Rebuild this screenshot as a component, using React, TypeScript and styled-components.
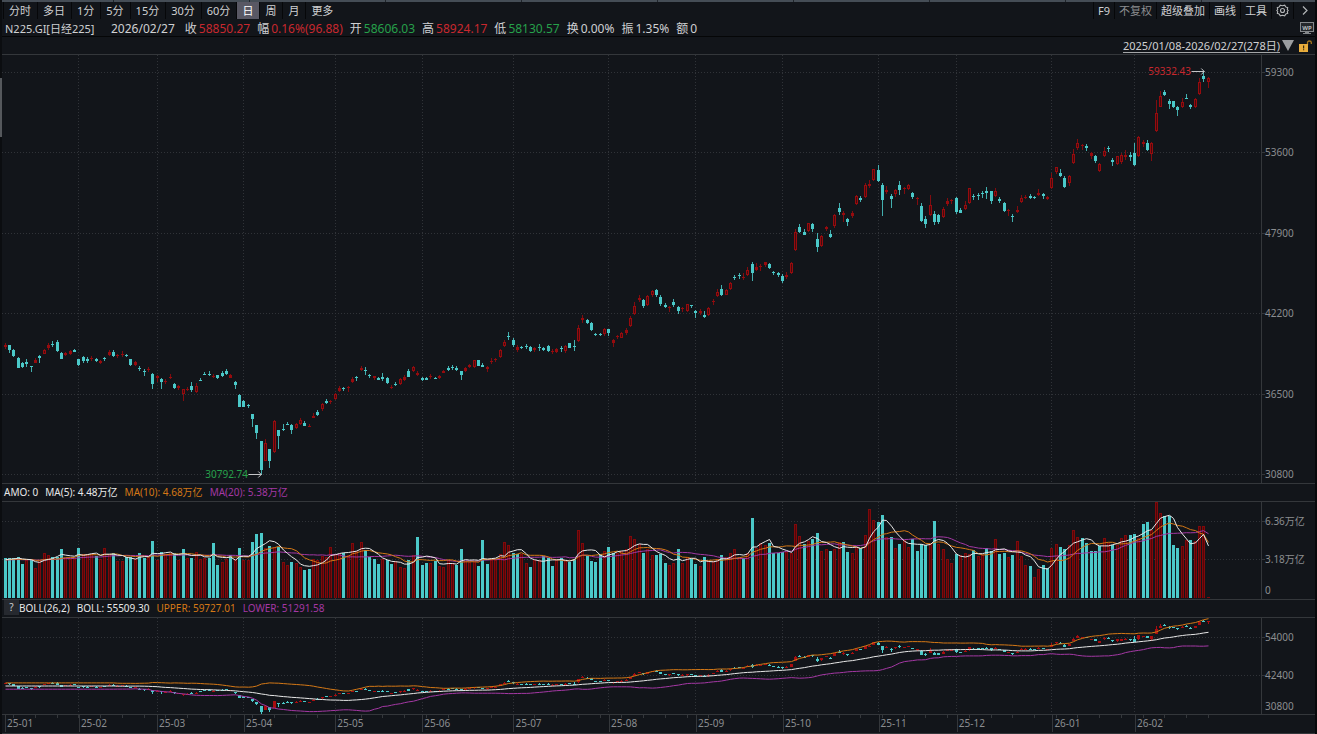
import React from "react";
import styled, { createGlobalStyle } from "styled-components";

const color = {
  bg: "#12151a",
  line: "#34373b",
  grid: "#303338",
  text: "#cfd0d2",
  dim: "#8b8d90",
  red: "#c8282e",
  green: "#26a04a",
  cyan: "#4bc9c9",
  orange: "#d47816",
  purple: "#a438a4",
  white: "#e8e8e8",
};

/* ---------- data ---------- */

// One candle per token: direction, then high, body top, body bottom, low as chart levels.
const CANDLES = `
r343,345,347,349 c345,345,350,353 c349,350,356,357 c357,358,368,368 c362,363,367,368 c359,362,364,367 c366,366,367,372
r358,360,363,363 c355,356,358,363 r349,350,354,354 r343,345,348,350 c341,344,345,347 c340,342,351,352 c352,353,359,359
r352,353,355,356 r350,351,354,355 c349,350,352,352 c359,359,365,366 c356,357,361,363 c357,359,361,363 r356,358,359,361
c358,359,361,362 r360,361,363,364 c357,358,359,361 r350,352,355,356 c350,352,356,357 r354,355,356,358 r351,354,355,357
c354,355,356,357 c359,359,365,366 r361,362,365,366 c366,368,369,371 c369,371,372,376 r367,369,370,372 c373,374,384,389
r375,376,378,382 c378,379,382,389 r379,381,382,384 r374,377,378,379 c383,384,388,389 r385,386,388,390 r389,389,394,401
r387,389,390,391 c382,386,390,392 r383,386,392,393 c378,380,381,381 c372,374,375,375 c371,374,375,376 r374,376,377,378
c375,375,378,379 c371,373,376,377 c369,371,374,375 r374,375,378,378 c381,382,385,389 c394,395,407,407 c400,401,407,407
c404,405,406,408 c414,414,419,427 c425,425,433,439 c441,441,470,475 r439,443,461,461 c449,449,461,468 r420,421,452,453
c430,430,436,449 c424,429,430,431 c422,424,425,425 c424,425,430,434 r423,424,428,429 r418,420,424,425 c421,423,426,426
r424,426,427,427 r413,416,418,418 c410,412,415,416 r403,404,409,411 c399,401,403,404 r400,401,402,404 r393,394,399,400
r386,388,391,392 c387,388,389,391 r386,387,388,392 r377,379,382,383 c376,377,378,381 r366,368,370,371 c367,370,371,375
c374,375,376,378 r376,376,378,380 c377,378,380,380 c373,377,379,381 c377,378,383,384 r385,387,388,389 c382,384,385,386
r378,379,384,385 r375,377,380,381 c369,371,377,377 r366,367,371,372 r371,373,375,376 c377,378,380,381 c377,378,380,380
r374,376,377,379 c377,378,379,379 r375,376,378,379 r370,371,373,373 c366,368,370,371 c365,367,368,370 c366,368,370,371
c371,371,375,380 r367,368,371,372 r364,365,367,368 r360,360,367,368 c360,360,366,366 c363,365,367,367 r366,367,369,372
r358,361,362,364 r358,359,360,362 r349,350,357,358 r340,342,346,347 c332,336,337,340 c338,340,345,347 r345,347,350,352
c346,347,348,349 c344,346,347,349 c346,347,351,352 r347,348,350,352 c344,347,348,351 c347,348,350,351 c345,346,351,352
r349,351,352,354 r348,349,352,353 c346,348,349,352 r345,346,351,353 c343,343,348,348 c340,346,347,351 r325,328,341,342
r315,318,320,323 c319,320,323,324 c322,323,330,331 c333,334,335,336 c333,334,335,336 r328,329,334,336 c329,329,333,336
r339,340,343,347 r335,336,337,339 r332,333,338,338 r328,330,333,335 r316,318,326,327 r302,306,314,315 r295,298,300,302
c299,300,306,308 r295,296,305,306 r290,291,295,297 c289,290,295,297 c295,297,304,306 c303,305,307,308 r306,307,308,312
c299,302,305,307 c306,307,311,314 r307,308,309,312 r304,304,311,312 c305,305,306,308 c310,311,313,318 r309,311,313,315
c311,315,317,318 r307,308,315,316 r299,301,302,305 r289,292,296,297 c285,289,295,296 r289,290,295,295 r282,283,289,290
c275,277,278,280 c273,275,276,279 r273,277,278,280 r267,270,275,276 c262,264,273,281 r263,267,270,271 r264,266,267,271
r262,262,265,267 c263,264,268,269 c271,272,273,275 c272,273,275,277 c274,276,281,283 r272,275,277,279 r262,263,273,274
r229,232,250,251 c224,227,232,233 c229,232,235,235 r223,223,231,232 c223,224,229,232 c233,239,247,252 r235,236,246,247
r226,227,229,231 c230,234,237,238 r214,215,226,228 c203,208,212,215 r211,213,215,222 c218,219,222,226 r211,213,216,218
r195,196,204,205 c196,198,200,202 r183,185,197,198 r180,184,186,188 r169,169,180,181 c165,170,181,182 c183,185,200,216
r186,190,192,194 c194,196,199,208 r189,190,194,197 c181,185,190,195 r187,188,189,194 r184,185,189,190 c192,193,197,199
r197,198,199,205 c203,206,221,222 c216,219,224,228 r195,205,215,216 c211,214,222,225 c214,215,222,224 r207,209,217,218
r198,201,204,206 r199,200,201,204 c197,198,212,214 c208,210,213,213 r201,205,209,210 r188,188,203,204 c194,196,197,200
c193,195,196,200 c191,193,194,198 c187,191,193,199 c191,191,201,204 r188,191,196,197 c197,199,201,203 c202,203,211,212
r209,210,211,216 c214,216,217,222 r206,210,212,213 r195,198,202,203 r195,197,198,199 c194,196,198,199 c196,197,198,199
r189,193,195,196 c193,194,196,199 r196,197,199,200 r173,178,188,189 r167,167,172,174 c169,173,176,177 c176,178,187,188
r175,176,183,186 r149,154,163,164 r139,143,148,150 r144,145,146,150 c144,146,148,151 r152,153,156,159 c155,156,161,163
r163,164,171,172 r147,151,156,157 c146,148,149,152 c158,160,162,166 r156,156,164,165 r153,155,162,164 r150,155,157,160
c152,155,157,161 c143,153,165,166 r136,137,156,157 r140,142,144,147 c140,143,150,151 r142,143,154,161 r100,113,131,132
r91,96,107,107 c90,92,95,96 c99,101,104,109 c101,101,107,108 c106,107,110,116 r98,102,107,108 c94,98,98,99
c104,105,107,109 r98,99,107,108 r78,82,94,95 c71,76,79,82 r77,78,82,88`;

// One volume bar per token: direction and the level of its top (355 is zero, three levels per unit).
const VOLUMES = `
c235 c233 c235 c230 c251 r240 c240 r265 r240 r220 r226 c230 c230 c208 r233 r236 r236 c203 r222 r222 r222 c228 r238 r203 r222
c220 r244 r244 c230 c232 r236 c218 c233 r230 c183 r240 c216 r222 r220 c218 r240 c206 r234 c233 r216 r236 r233 c235 c190 c256
r247 r238 c224 r238 c203 r240 r240 c185 c162 c160 r205 c198 r200 c200 r247 r256 c247 r250 r262 c270 c266 r236 r240 r228 r230
r200 r222 r222 c218 r225 r190 r213 r185 c210 c230 c238 c252 r238 c240 c252 r243 r262 r265 c240 r224 c172 c256 c249 r248 c244
r258 r262 r240 r248 c254 c208 r244 r247 r246 c259 c181 c253 r240 r240 r222 r187 r195 c220 c222 r222 r249 c262 r240 r240 c228
c233 c258 r240 c233 r240 c245 c238 r150 r190 c228 c243 c247 c222 r214 c201 c220 r218 r212 r208 r168 r178 r193 c219 r208 r226
c226 c222 c250 r255 r250 c206 r250 r230 c238 c251 r258 c232 r243 r243 r238 c226 r232 r220 r208 r232 c234 r218 c115 r205 r188
r195 c190 c218 c218 c215 r215 r220 r132 r168 c192 r182 c176 c160 r212 r208 c213 r207 r185 c186 c217 r218 r200 c205 r165 r87
r120 c126 c104 r170 c172 r205 c192 r180 r202 c178 c212 c193 c195 r188 c124 r192 r208 r238 r250 c222 r225 r220 r222 c210 r228
r225 c203 c213 r178 c222 c218 r232 c226 r183 r228 r256 c258 r290 r268 c254 c265 r205 r193 c202 c208 r195 r150 r172 c174 c190
c213 c213 c198 r175 r190 c195 r195 r173 r165 c165 c162 r175 c132 c126 r150 r67 r98 c108 c107 c196 c203 r198 r180 c180 r182
r137 r137 r352`;

const MONTHS = [
  { label: "25-01", days: 17 },
  { label: "25-02", days: 18 },
  { label: "25-03", days: 20 },
  { label: "25-04", days: 21 },
  { label: "25-05", days: 20 },
  { label: "25-06", days: 21 },
  { label: "25-07", days: 22 },
  { label: "25-08", days: 20 },
  { label: "25-09", days: 20 },
  { label: "25-10", days: 22 },
  { label: "25-11", days: 18 },
  { label: "25-12", days: 22 },
  { label: "26-01", days: 19 },
  { label: "26-02", days: 29 },
];

type Candle = { up: boolean; high: number; top: number; bottom: number; low: number };

const candles: Candle[] = CANDLES.trim()
  .split(/\s+/)
  .map((token) => {
    const [high, top, bottom, low] = token.slice(1).split(",").map(Number);
    return { up: token[0] === "r", high, top, bottom, low };
  });

const volumes = VOLUMES.trim()
  .split(/\s+/)
  .map((token) => ({ up: token[0] === "r", y: 480 + Number(token.slice(1)) / 3 }));

const monthStarts = MONTHS.slice(0, -1).reduce<number[]>(
  (list, m) => [...list, (list[list.length - 1] ?? 0) + m.days],
  []
);

/* ---------- chart maths ---------- */

const PLOT_LEFT = 2;
const PLOT_WIDTH = 1259;
const barX = (i: number) => Math.floor(5 + i * 4.344);
const bollY = (y: number) => 637.3 + (y - 146.8) * 0.2322;
const mean = (list: number[]) => list.reduce((a, b) => a + b, 0) / list.length;

const movingAverage = (n: number) =>
  volumes.map((_, i) => {
    const window: number[] = [];
    for (let k = i - n + 1; k <= i; k++) window.push(k < 0 ? 560 : volumes[k].y);
    return mean(window);
  });

const closes = candles.map((c) => (c.up ? c.top : c.bottom));
const boll = closes.map((_, i) => {
  const end = Math.max(i, 25);
  const window = closes.slice(end - 25, end + 1);
  const mid = mean(window);
  const sd = Math.sqrt(mean(window.map((v) => (v - mid) ** 2)));
  return { mid: bollY(mid), upper: bollY(mid - 2 * sd), lower: bollY(mid + 2 * sd) };
});

const points = (ys: number[]) => ys.map((y, i) => `${barX(i) + 0.5},${y.toFixed(1)}`).join(" ");

/* ---------- styles ---------- */

const GlobalStyle = createGlobalStyle`
  * { box-sizing: border-box; }
  body { margin: 0; background: ${color.bg}; }
  button { font: inherit; color: inherit; background: none; border: 0; padding: 0; cursor: pointer; }
`;

const Page = styled.div`
  display: flex;
  min-height: 100vh;
  background: ${color.bg};
  color: ${color.text};
  font: 11px/16px "Noto Sans", "Noto Sans CJK SC", sans-serif;
  white-space: nowrap;
`;

const Rail = styled.aside`
  flex: none;
  width: 2px;
  padding-top: 78px;
  background: #0b0d10;
`;

const RailThumb = styled.div`
  height: 59px;
  background: #55585c;
`;

const Terminal = styled.main`
  flex: 1;
  min-width: 0;
  display: flex;
  flex-direction: column;
  border-right: 2px solid #08090b;
`;

const TopEdge = styled.div`
  height: 2px;
  background: repeating-linear-gradient(90deg, #454d56 0 135px, #20252b 135px 136px);
  background-position: -24px 0;
`;

const Toolbar = styled.nav`
  display: flex;
  justify-content: space-between;
  height: 17px;
  padding-left: 1px;
`;

const ToolGroup = styled.div`
  display: flex;
`;

const Tab = styled.button<{ $active?: boolean }>`
  height: 17px;
  padding: 0 6px 0 5px;
  border-left: 1px solid #060709;
  background: ${(p) => (p.$active ? "#595864" : "transparent")};
  color: ${(p) => (p.$active ? "#ffffff" : color.text)};
`;

const Tool = styled.button<{ $muted?: boolean }>`
  display: flex;
  align-items: center;
  height: 17px;
  padding: 0 4px;
  border-left: 1px solid #060709;
  color: ${(p) => (p.$muted ? color.dim : color.text)};
`;

const QuoteBar = styled.header`
  display: flex;
  align-items: center;
  height: 18px;
  padding: 2px 1px 0 3px;
  border-bottom: 1px solid #050607;
  font-size: 12px;
`;

const Symbol = styled.h1`
  margin: 0;
  min-width: 106px;
  font-size: 11px;
  font-weight: 400;
`;

const Quotes = styled.dl`
  display: flex;
  gap: 7px;
  margin: 0 auto 0 10px;
`;

const Quote = styled.div`
  display: flex;
  gap: 2px;
`;

const Value = styled.dd<{ $tone?: string }>`
  margin: 0;
  color: ${(p) => p.$tone ?? color.text};
`;

const RangeBar = styled.div`
  display: flex;
  justify-content: flex-end;
  align-items: center;
  gap: 2px;
  height: 17px;
  padding-right: 3px;
`;

const RangeButton = styled.button`
  display: flex;
  align-items: center;
  gap: 2px;
`;

const RangeText = styled.span`
  height: 14px;
  line-height: 14px;
  border-bottom: 1px solid #a4a6a8;
`;

const LockButton = styled.button`
  display: flex;
  margin-left: 3px;
`;

const Panel = styled.section<{ $height?: number }>`
  display: flex;
  flex: ${(p) => (p.$height ? `0 0 ${p.$height}px` : "1 0 429px")};
  border-top: 1px solid ${color.line};
`;

const Plot = styled.div`
  position: relative;
  flex: 1;
  min-width: 0;
`;

const PlotSvg = styled.svg`
  position: absolute;
  inset: 0;
  width: 100%;
  height: 100%;
  display: block;
`;

const Axis = styled.ul<{ $stacked?: boolean }>`
  flex: none;
  width: 54px;
  margin: 0;
  list-style: none;
  border-left: 1px solid ${color.line};
  color: ${color.dim};
  font-size: 10px;
  line-height: 12px;
  display: grid;
  padding: ${(p) => (p.$stacked ? "13px 0 0" : "11px 0 3px")};
  grid-template-rows: ${(p) => (p.$stacked ? "38px 31px 12px" : "none")};
  align-content: ${(p) => (p.$stacked ? "start" : "space-between")};
`;

const AxisLabel = styled.li<{ $tick?: boolean }>`
  display: flex;
  height: 12px;

  &::before {
    content: "";
    width: 3px;
    height: 1px;
    margin-top: 6px;
    background: ${(p) => (p.$tick ? color.line : "transparent")};
  }
`;

const Legend = styled.div`
  display: flex;
  flex: none;
  align-items: center;
  gap: 7px;
  height: 18px;
  padding: 0 0 2px 2px;
  border-top: 1px solid ${color.line};
  font-size: 10px;
`;

const LegendItem = styled.span<{ $tone?: string }>`
  color: ${(p) => p.$tone ?? color.white};
`;

const HelpButton = styled.button`
  width: 15px;
  height: 15px;
  margin-right: -7px;
  line-height: 15px;
  background: #26292f;
`;

const Callout = styled.div<{ $tone: string }>`
  position: absolute;
  display: flex;
  align-items: center;
  transform: translate(-100%, -50%);
  color: ${(p) => p.$tone};
  font-size: 10px;
  line-height: 12px;
`;

const TimeAxis = styled.footer`
  position: relative;
  flex: none;
  height: 20px;
  padding: 0 54px 0 3px;
  border-top: 1px solid ${color.line};
  border-bottom: 1px solid ${color.line};
`;

const Months = styled.ol`
  display: grid;
  grid-template-columns: ${MONTHS.map((m) => `${m.days}fr`).join(" ")};
  margin: 0;
  padding: 0;
  list-style: none;
`;

const Month = styled.li`
  min-width: 0;
  height: 17px;
  padding-left: 1px;
  border-left: 1px solid ${color.line};
  color: ${color.dim};
  font-size: 10px;
  line-height: 17px;
`;

const TickSvg = styled.svg`
  position: absolute;
  top: 0;
  left: 0;
  width: calc(100% - 54px);
  height: 4px;
`;

/* ---------- drawings ---------- */

const GearIcon = () => (
  <svg width="13" height="13" viewBox="0 0 13 13" fill="none" stroke="#b4b6b8" strokeWidth="1.1" aria-hidden="true">
    <path d="M4.3 1.2L6.5 1.800l2.200-.6 1 1.700 2 .8-.4 1.800.9 1-.9 1 .4 1.800-2 .8-1 1.700-2.200-.6-2.200.6-1-1.700-2-.8.4-1.800-.9-1 .9-1-.4-1.800 2-.8z" />
    <circle cx="6.5" cy="6.5" r="2" />
  </svg>
);

const ChevronIcon = () => (
  <svg width="13" height="13" viewBox="0 0 13 13" fill="none" stroke="#b4b6b8" strokeWidth="1.2" aria-hidden="true">
    <path d="M5 2.5l4 4-4 4" />
  </svg>
);

const MonitorIcon = () => (
  <svg width="14" height="13" viewBox="0 0 14 13" aria-hidden="true">
    <rect x="0.5" y="0.5" width="13" height="9" fill="#24272b" stroke="#85888b" />
    <text x="7" y="7.5" textAnchor="middle" fontSize="6" fontWeight="700" fill="#b9bbbd">
      WP
    </text>
    <path d="M5 10h4v1h2v1H3v-1h2z" fill="#85888b" />
  </svg>
);

const TriangleIcon = () => (
  <svg width="12" height="11" viewBox="0 0 12 11" aria-hidden="true">
    <path d="M0 0h12L6 11z" fill="#9b9da0" />
  </svg>
);

const LockIcon = () => (
  <svg width="13" height="12" viewBox="0 0 13 12" aria-hidden="true">
    <path d="M8.5 5V2.6Q8.5 1 10.4 1T12.3 2.6V4" fill="none" stroke="#a8781f" strokeWidth="1.3" />
    <rect x="0" y="4" width="9" height="8" fill="#e9ad3c" />
    <path d="M4 5.500h1.200v3h-1.200zM4 9.300h1.200v1h-1.200z" fill="#3a2a08" />
  </svg>
);

const Arrow = () => (
  <svg width="14" height="7" viewBox="0 0 14 7" fill="none" stroke="#c4c5c7" aria-hidden="true">
    <path d="M0 3.500h13M10 0.500l3 3-3 3" />
  </svg>
);

const Grid = ({ rows, top, height }: { rows: number[]; top: number; height: number }) => (
  <g stroke={color.grid} strokeDasharray="1 2">
    {rows.map((y) => (
      <path key={y} d={`M${PLOT_LEFT} ${y}.5H${PLOT_LEFT + PLOT_WIDTH}`} />
    ))}
    {monthStarts.map((i) => (
      <path key={i} d={`M${barX(i)}.5 ${top}V${top + height}`} />
    ))}
  </g>
);

const PriceCandle = ({ c, x }: { c: Candle; x: number }) => {
  const height = Math.max(1, c.bottom - c.top);
  const tone = c.up ? "#960b0e" : color.cyan;
  return (
    <g>
      <rect x={x} y={c.high} width="1" height={Math.max(1, c.low - c.high)} fill={tone} opacity="0.85" />
      <rect x={x - 1} y={c.top} width="3" height={height} fill={tone} />
      {c.up && height > 3 && <rect x={x} y={c.top + 1} width="1" height={height - 2} fill="#450a0d" />}
    </g>
  );
};

const Canvas = ({ top, height, children }: { top: number; height: number; children: React.ReactNode }) => (
  <PlotSvg
    viewBox={`${PLOT_LEFT} ${top} ${PLOT_WIDTH} ${height}`}
    preserveAspectRatio="none"
    shapeRendering="crispEdges"
    aria-hidden="true"
  >
    {children}
  </PlotSvg>
);

const Curve = ({ ys, tone }: { ys: number[]; tone: string }) => (
  <polyline points={points(ys)} fill="none" stroke={tone} shapeRendering="auto" />
);

const AxisScale = ({ labels, stacked }: { labels: string[]; stacked?: boolean }) => (
  <Axis $stacked={stacked}>
    {labels.map((label, i) => (
      <AxisLabel key={label} $tick={!stacked || i < 2}>
        {label}
      </AxisLabel>
    ))}
  </Axis>
);

/* ---------- page ---------- */

const PERIODS = ["分时", "多日", "1分", "5分", "15分", "30分", "60分", "日", "周", "月", "更多"];

const QUOTES = [
  { name: "收", value: "58850.27", tone: color.red },
  { name: "幅", value: "0.16%(96.88)", tone: color.red },
  { name: "开", value: "58606.03", tone: color.green },
  { name: "高", value: "58924.17", tone: color.red },
  { name: "低", value: "58130.57", tone: color.green },
  { name: "换", value: "0.00%" },
  { name: "振", value: "1.35%" },
  { name: "额", value: "0" },
];

export default function App() {
  return (
    <Page>
      <GlobalStyle />
      <Rail>
        <RailThumb />
      </Rail>
      <Terminal>
        <TopEdge />
        <Toolbar>
          <ToolGroup>
            {PERIODS.map((p) => (
              <Tab key={p} $active={p === "日"}>
                {p}
              </Tab>
            ))}
          </ToolGroup>
          <ToolGroup>
            <Tool>F9</Tool>
            <Tool $muted>不复权</Tool>
            <Tool>超级叠加</Tool>
            <Tool>画线</Tool>
            <Tool>工具</Tool>
            <Tool aria-label="设置">
              <GearIcon />
            </Tool>
            <Tool aria-label="展开">
              <ChevronIcon />
            </Tool>
          </ToolGroup>
        </Toolbar>

        <QuoteBar>
          <Symbol>N225.GI[日经225]</Symbol>
          <time dateTime="2026-02-27">2026/02/27</time>
          <Quotes>
            {QUOTES.map((q) => (
              <Quote key={q.name}>
                <dt>{q.name}</dt>
                <Value $tone={q.tone}>{q.value}</Value>
              </Quote>
            ))}
          </Quotes>
          <MonitorIcon />
        </QuoteBar>

        <RangeBar>
          <RangeButton>
            <RangeText>2025/01/08-2026/02/27(278日)</RangeText>
            <TriangleIcon />
          </RangeButton>
          <LockButton aria-label="解锁">
            <LockIcon />
          </LockButton>
        </RangeBar>

        <Panel>
          <Plot>
            <Canvas top={55} height={428}>
              <Grid rows={[72, 152, 233, 313, 394, 474]} top={55} height={428} />
              {candles.map((c, i) => (
                <PriceCandle key={i} c={c} x={barX(i)} />
              ))}
            </Canvas>
            <Callout $tone={color.red} style={{ left: `${((1205 - PLOT_LEFT) / PLOT_WIDTH) * 100}%`, top: `${(16 / 428) * 100}%` }}>
              59332.43
              <Arrow />
            </Callout>
            <Callout $tone={color.green} style={{ left: `${((262 - PLOT_LEFT) / PLOT_WIDTH) * 100}%`, top: `${(419 / 428) * 100}%` }}>
              30792.74
              <Arrow />
            </Callout>
          </Plot>
          <AxisScale labels={["59300", "53600", "47900", "42200", "36500", "30800"]} />
        </Panel>

        <Legend>
          <LegendItem>AMO: 0</LegendItem>
          <LegendItem>MA(5): 4.48万亿</LegendItem>
          <LegendItem $tone={color.orange}>MA(10): 4.68万亿</LegendItem>
          <LegendItem $tone={color.purple}>MA(20): 5.38万亿</LegendItem>
        </Legend>

        <Panel $height={98}>
          <Plot>
            <Canvas top={502} height={97}>
              <Grid rows={[521, 559]} top={502} height={97} />
              {volumes.map((v, i) => {
                const x = barX(i);
                const y = Math.round(v.y);
                return (
                  <g key={i}>
                    <rect x={x - 1} y={y} width="3" height={598 - y} fill={v.up ? "#80090b" : color.cyan} />
                    {v.up && <rect x={x} y={y + 1} width="1" height={Math.max(0, 597 - y)} fill="#540507" />}
                  </g>
                );
              })}
              <Curve ys={movingAverage(20)} tone={color.purple} />
              <Curve ys={movingAverage(10)} tone={color.orange} />
              <Curve ys={movingAverage(5)} tone={color.white} />
            </Canvas>
          </Plot>
          <AxisScale stacked labels={["6.36万亿", "3.18万亿", "0"]} />
        </Panel>

        <Legend>
          <HelpButton aria-label="指标说明">?</HelpButton>
          <LegendItem>BOLL(26,2)</LegendItem>
          <LegendItem>BOLL: 55509.30</LegendItem>
          <LegendItem $tone={color.orange}>UPPER: 59727.01</LegendItem>
          <LegendItem $tone={color.purple}>LOWER: 51291.58</LegendItem>
        </Legend>

        <Panel $height={97}>
          <Plot>
            <Canvas top={618} height={96}>
              <Grid rows={[637, 675]} top={618} height={96} />
              {candles.map((c, i) => {
                const x = barX(i);
                const high = Math.round(bollY(c.high));
                const low = Math.round(bollY(c.low));
                const top = Math.round(bollY(c.top));
                const bottom = Math.round(bollY(c.bottom));
                const tone = c.up ? "#a80d10" : color.cyan;
                return (
                  <g key={i} fill={tone}>
                    <rect x={x} y={high} width="1" height={Math.max(1, low - high)} />
                    <rect x={x - 1} y={top} width="3" height={Math.max(1, bottom - top)} />
                  </g>
                );
              })}
              <Curve ys={boll.map((b) => b.lower)} tone={color.purple} />
              <Curve ys={boll.map((b) => b.upper)} tone={color.orange} />
              <Curve ys={boll.map((b) => b.mid)} tone={color.white} />
            </Canvas>
          </Plot>
          <AxisScale stacked labels={["54000", "42400", "30800"]} />
        </Panel>

        <TimeAxis>
          <TickSvg viewBox={`${PLOT_LEFT} 0 ${PLOT_WIDTH} 4`} preserveAspectRatio="none" aria-hidden="true">
            {candles.map((_, i) =>
              i % 5 === 2 ? <rect key={i} x={barX(i)} y="0" width="1" height="3" fill={color.line} /> : null
            )}
          </TickSvg>
          <Months>
            {MONTHS.map((m) => (
              <Month key={m.label}>{m.label}</Month>
            ))}
          </Months>
        </TimeAxis>
      </Terminal>
    </Page>
  );
}
